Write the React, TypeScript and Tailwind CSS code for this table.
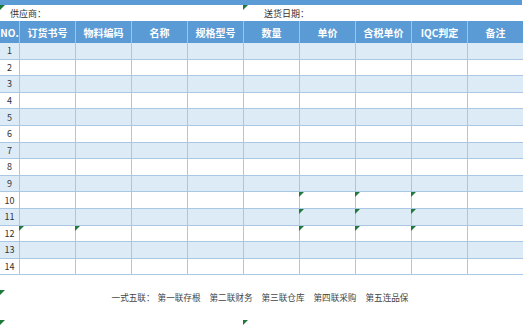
const font = { fontFamily: '"Noto Sans CJK SC", "Noto Sans", sans-serif' };

const headers = ['NO.', '订货书号', '物料编码', '名称', '规格型号', '数量', '单价', '含税单价', 'IQC判定', '备注'];

const copies = ['第一联存根', '第二联财务', '第三联仓库', '第四联采购', '第五连品保'];

// Excel "number stored as text" marks: row -> column indexes
const marks: Record<number, number[]> = {
  10: [6, 7, 8],
  11: [6, 7, 8],
  12: [1, 2, 6, 7, 8],
};

function Tri({ className = '' }: { className?: string }) {
  return (
    <svg
      aria-hidden
      width="5"
      height="5"
      viewBox="0 0 5 5"
      className={`pointer-events-none absolute ${className}`}
    >
      <polygon points="0,0 5,0 0,5" fill="#1f7a3a" />
    </svg>
  );
}

export default function App() {
  const rows = Array.from({ length: 14 }, (_, i) => i + 1);

  return (
    <div className="relative h-[326px] w-[526px] overflow-hidden bg-white text-[#333]" style={font}>
      {/* barra superior */}
      <div className="h-[5px] w-[522px] bg-[#5b9bd5]" />

      {/* proveedor / fecha */}
      <div className="flex h-[16px] w-[523px] items-center text-[9px] leading-none">
        <div className="relative flex h-full w-[243px] items-center pl-[10px]">
          <Tri className="left-0 top-0" />
          供应商：
        </div>
        <div className="relative flex h-full flex-1 items-center pl-[21px]">
          <Tri className="left-0 top-0" />
          送货日期：
        </div>
      </div>

      {/* tabla */}
      <div className="w-[523px]">
        <div className="grid h-[22px] grid-cols-[19px_repeat(9,56px)] bg-[#5b9bd5] text-[10px] font-bold text-white">
          {headers.map((h, i) => (
            <div
              key={h}
              className={`flex items-center justify-center whitespace-nowrap ${i > 0 ? 'border-l border-[#9dc3e6]' : ''}`}
            >
              {h}
            </div>
          ))}
        </div>
        {rows.map((r) => (
          <div
            key={r}
            className={`grid h-[16.6px] grid-cols-[19px_repeat(9,56px)] border-b border-[#aac7e4] ${r % 2 === 1 ? 'bg-[#ddebf7]' : 'bg-white'}`}
          >
            {headers.map((h, i) => (
              <div
                key={h}
                className={`relative flex items-center justify-center text-[9px] leading-none ${i > 0 ? 'border-l border-[#aac7e4]' : ''}`}
              >
                {i === 0 ? r : null}
                {marks[r]?.includes(i) && <Tri className="-left-px top-0" />}
              </div>
            ))}
          </div>
        ))}
      </div>

      {/* pie */}
      <div className="relative mt-[12px] flex h-[20px] items-center justify-center pr-[6px] text-[8.6px] leading-none text-[#444]">
        <Tri className="left-0 top-[3px]" />
        <span className="mr-[3px]">一式五联：</span>
        <div className="flex gap-[9px]">
          {copies.map((c) => (
            <span key={c}>{c}</span>
          ))}
        </div>
      </div>
      <div className="relative mt-[13px] h-[5px]">
        <Tri className="left-0 top-0" />
        <Tri className="left-[243px] top-0" />
      </div>
    </div>
  );
}
